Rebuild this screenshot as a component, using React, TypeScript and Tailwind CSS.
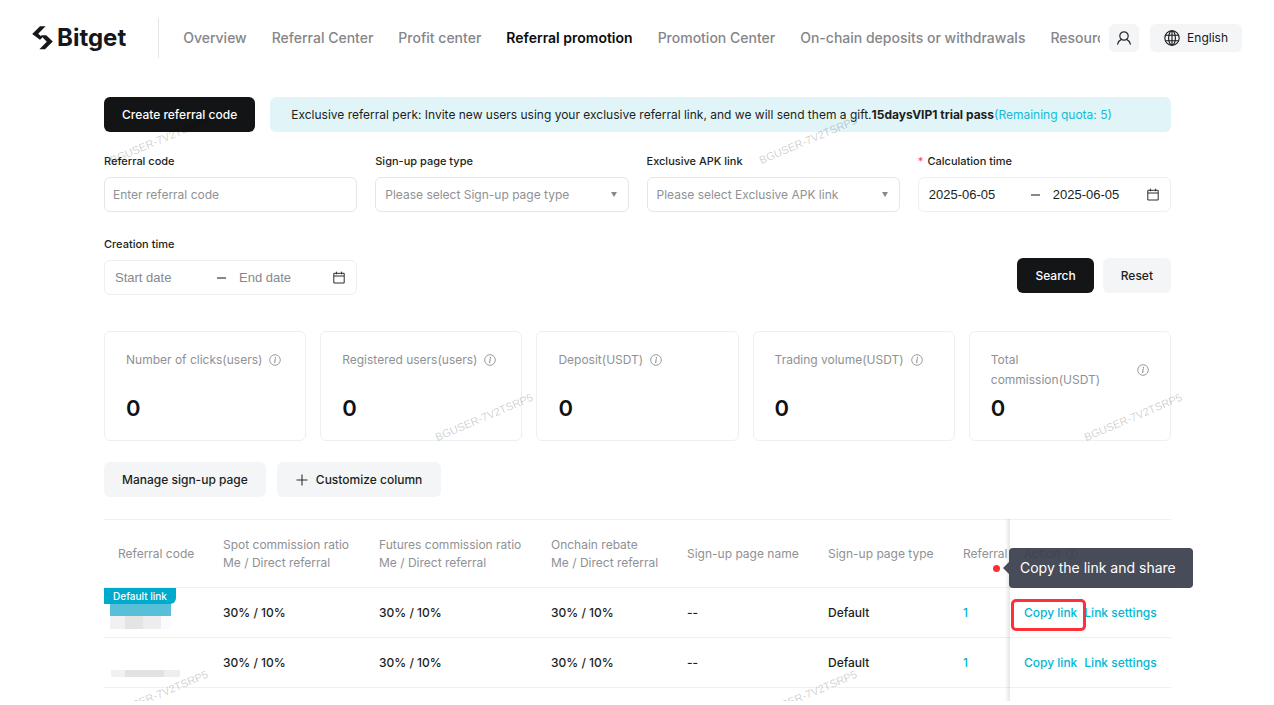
import { useState } from "react";

const NAV = [
  "Overview",
  "Referral Center",
  "Profit center",
  "Referral promotion",
  "Promotion Center",
  "On-chain deposits or withdrawals",
  "Resources",
];

const STATS = [
  "Number of clicks(users)",
  "Registered users(users)",
  "Deposit(USDT)",
  "Trading volume(USDT)",
  "Total commission(USDT)",
];

const ROWS = [
  { id: "a", isDefault: true, ratio: "30% / 10%", pageName: "--", pageType: "Default", referrals: 1 },
  { id: "b", isDefault: false, ratio: "30% / 10%", pageName: "--", pageType: "Default", referrals: 1 },
];

const MARK = "BGUSER-7V2TSRP5";

function InfoIcon() {
  return (
    <svg viewBox="0 0 12 12" className="size-3 shrink-0" fill="none" stroke="#8f9194" aria-hidden="true">
      <circle cx="6" cy="6" r="5.3" strokeWidth="0.9" />
      <path d="M6.1 5.3 5.7 8.6M6.4 3.2l-.1.9" strokeWidth="1.1" strokeLinecap="round" />
    </svg>
  );
}

function CalendarIcon() {
  return (
    <svg viewBox="0 0 12 13" className="h-[13px] w-3 shrink-0" fill="none" stroke="#2b2d30" aria-hidden="true">
      <path d="M.8 2.3h10.4v9.7H.8zM.8 5h10.4M3.4.7v2.6M8.6.7v2.6" strokeWidth="1" strokeLinejoin="round" />
    </svg>
  );
}

function Logo() {
  return (
    <a href="#home" className="flex items-center gap-1 text-[#15171a]">
      <svg viewBox="0 0 21 24" className="h-6 w-[21px]" fill="currentColor" aria-hidden="true">
        <path d="M8 .3h5.600L6.200 7.800l4.300 3.600-2.500 2.300L.2 7.900z" />
        <path d="M13 23.200H7.400l7.400-7.500-4.600-4.600H7.600L9.800 9.300h4.400l6.600 6.300z" />
      </svg>
      <span className="text-[24px] leading-8 font-bold">Bitget</span>
    </a>
  );
}

function Header() {
  return (
    <header className="flex h-[76px] items-center pr-8 pl-8">
      <Logo />
      <div className="ml-8 h-10 w-px shrink-0 bg-[#e3e4e6]" />
      <nav className="ml-6 flex min-w-0 flex-1 gap-[25px] overflow-hidden text-[14px] leading-5 font-medium whitespace-nowrap text-[#85868a]">
        {NAV.map((n) => (
          <a key={n} href="#nav" className={n === "Referral promotion" ? "font-semibold text-[#0b0c0e]" : ""}>
            {n}
          </a>
        ))}
      </nav>
      <button aria-label="Account" className="ml-[9px] flex h-7 w-[30px] items-center justify-center rounded-md bg-[#f4f5f7]">
        <svg viewBox="0 0 14 14" className="size-[14px]" fill="none" stroke="#2b2d30" strokeWidth="1.2" strokeLinecap="round">
          <circle cx="7" cy="5" r="4.2" />
          <path d="M4.4 8.400C2.600 9.200 1.200 10.800.6 13.200M9.600 8.400c1.800.8 3.200 2.400 3.800 4.800" />
        </svg>
      </button>
      <button className="ml-[11px] flex h-7 items-center gap-[7px] rounded-md bg-[#f4f5f7] px-[14px] text-[12px] text-[#15171a]">
        <svg viewBox="0 0 16 16" className="size-4" fill="none" stroke="#15171a" strokeWidth="1.1">
          <circle cx="8" cy="8" r="7.2" />
          <ellipse cx="8" cy="8" rx="3.4" ry="7.2" />
          <path d="M8 .8v14.400M1.500 5.300h13M1.500 10.700h13" />
        </svg>
        English
      </button>
    </header>
  );
}

function SelectField({ id, label, placeholder }: { id: string; label: string; placeholder: string }) {
  return (
    <div>
      <label htmlFor={id} className="block text-[11px] leading-4 font-medium">
        {label}
      </label>
      <div className="relative mt-2">
        <select
          id={id}
          className="h-[35px] w-full appearance-none rounded-md border border-[#e5e6e8] bg-white px-[9px] text-[12px] text-[#8f9194]"
        >
          <option>{placeholder}</option>
        </select>
        <svg viewBox="0 0 6 5" className="pointer-events-none absolute top-[15px] right-3 h-[5px] w-[6px]" fill="#86888b">
          <path d="M0 0h6L3 5z" />
        </svg>
      </div>
    </div>
  );
}

function DateRange({ label, required, from, to }: { label: string; required?: boolean; from: string; to: string }) {
  const [start, setStart] = useState(from);
  const [end, setEnd] = useState(to);
  const input = "w-[89px] min-w-0 bg-transparent font-['Liberation_Sans',sans-serif] text-[13px] placeholder:text-[#86888b]";

  return (
    <fieldset>
      <legend className="text-[11px] leading-4 font-medium">
        {required && <span className="mr-1 text-[#ff4d6a]">*</span>}
        {label}
      </legend>
      <div className="mt-2 flex h-[35px] items-center rounded-md border border-[#eeeff1] pr-[11px] pl-[10px]">
        <input
          aria-label="Start date"
          placeholder="Start date"
          value={start}
          onChange={(e) => setStart(e.target.value)}
          className={input}
        />
        <span className="mx-[13px] h-[2px] w-[9px] shrink-0 bg-[#86888b]" />
        <input
          aria-label="End date"
          placeholder="End date"
          value={end}
          onChange={(e) => setEnd(e.target.value)}
          className={input}
        />
        <span className="ml-auto">
          <CalendarIcon />
        </span>
      </div>
    </fieldset>
  );
}

function Filters() {
  return (
    <form className="mt-[21px] grid grid-cols-4 gap-x-[18px] gap-y-6" onSubmit={(e) => e.preventDefault()}>
      <div>
        <label htmlFor="code" className="block text-[11px] leading-4 font-medium">
          Referral code
        </label>
        <input
          id="code"
          placeholder="Enter referral code"
          className="mt-2 h-[35px] w-full rounded-md border border-[#e5e6e8] px-2 text-[12px] placeholder:text-[#8f9194]"
        />
      </div>
      <SelectField id="page-type" label="Sign-up page type" placeholder="Please select Sign-up page type" />
      <SelectField id="apk" label="Exclusive APK link" placeholder="Please select Exclusive APK link" />
      <DateRange label="Calculation time" required from="2025-06-05" to="2025-06-05" />
      <DateRange label="Creation time" from="" to="" />
      <div className="col-span-3 flex items-end justify-end gap-[9px] pb-[2px] text-[12px] font-medium">
        <button className="h-[35px] rounded-md bg-[#131516] px-[18px] text-white">Search</button>
        <button type="reset" className="h-[35px] rounded-md bg-[#f4f5f7] px-[18px]">
          Reset
        </button>
      </div>
    </form>
  );
}

function RedactedCode({ isDefault }: { isDefault: boolean }) {
  if (!isDefault) {
    return (
      <div className="ml-[7px] flex h-[27px] items-end">
        <span className="h-[7px] w-[14px] bg-[#f1f1f2]" />
        <span className="h-[7px] w-[39px] bg-[#e2e2e3]" />
        <span className="h-[7px] w-4 bg-[#eeeeef]" />
      </div>
    );
  }
  return (
    <div className="flex h-[49px] flex-col items-start">
      <span className="h-4 w-[72px] rounded-br-md bg-[#00aacd] text-center text-[10px] leading-4 font-medium text-white">
        Default link
      </span>
      <span className="ml-[6px] h-3 w-[61px] bg-[#57bfd8]" />
      <span className="ml-[6px] flex h-[13px]">
        <span className="w-[15px] bg-[#f1f1f3]" />
        <span className="w-[18px] bg-[#e3e4e4]" />
        <span className="w-[18px] bg-[#ededef]" />
        <span className="w-[10px] bg-[#fafbfe]" />
      </span>
    </div>
  );
}

function LinkTable() {
  const cell = "px-[14px]";
  return (
    <div className="relative mt-[22px] pb-[13px] text-[12px]">
      <table className="w-full table-fixed border-collapse text-left">
        <colgroup>
          <col className="w-[105px]" />
          <col className="w-[156px]" />
          <col className="w-[172px]" />
          <col className="w-[136px]" />
          <col className="w-[141px]" />
          <col className="w-[135px]" />
          <col />
          <col className="w-[161px]" />
        </colgroup>
        <thead>
          <tr className="h-[68px] border-y border-[#eff0f1] leading-[18px] text-[#8f9194] [&>th]:font-normal [&>th]:whitespace-nowrap">
            <th className={cell}>Referral code</th>
            <th className={cell}>
              Spot commission ratio
              <br />
              Me / Direct referral
            </th>
            <th className={cell}>
              Futures commission ratio
              <br />
              Me / Direct referral
            </th>
            <th className={cell}>
              Onchain rebate
              <br />
              Me / Direct referral
            </th>
            <th className={cell}>Sign-up page name</th>
            <th className={cell}>Sign-up page type</th>
            <th className="pl-[14px]">Referral</th>
            <th className={cell}>
              <span className="flex items-center gap-[6px]">
                Action <InfoIcon />
              </span>
            </th>
          </tr>
        </thead>
        <tbody>
          {ROWS.map((r) => (
            <tr key={r.id} className="h-[50px] border-b border-[#eff0f1] font-medium text-[#1c1e21]">
              <td className={r.isDefault ? "align-top" : "align-bottom pb-[10px]"}>
                <RedactedCode isDefault={r.isDefault} />
              </td>
              <td className={cell}>{r.ratio}</td>
              <td className={cell}>{r.ratio}</td>
              <td className={cell}>{r.ratio}</td>
              <td className={cell}>{r.pageName}</td>
              <td className={cell}>{r.pageType}</td>
              <td className="pl-[14px] text-[#00b4cf]">{r.referrals}</td>
              <td className={cell}>
                <span className="flex gap-[7px] whitespace-nowrap text-[#00b8d4]">
                  <span className="relative">
                    <a href="#copy">Copy link</a>
                    {r.isDefault && (
                      <span className="pointer-events-none absolute -top-[5px] -right-[9px] -bottom-[9px] -left-[13px] z-10 rounded-[5px] border-3 border-[#ff3038]" />
                    )}
                  </span>
                  <a href="#settings">Link settings</a>
                </span>
              </td>
            </tr>
          ))}
        </tbody>
      </table>

      {/* edge of the pinned action column */}
      <div className="pointer-events-none absolute top-0 right-[161px] bottom-0 w-[5px] bg-linear-to-r from-transparent to-black/10" />

      <div role="tooltip" className="absolute top-[29px] -right-[22px] z-20 flex items-center">
        <span className="size-[7px] rounded-full bg-[#ff2d37]" />
        <svg viewBox="0 0 6 12" className="ml-[3px] h-3 w-[6px]" fill="#484b58">
          <path d="M6 0v12L0 6z" />
        </svg>
        <span className="flex h-10 w-[184px] items-center rounded-[4px] bg-[#3a3d4b]/93 px-[11px] pb-[2px] text-[14px] whitespace-nowrap text-white">
          Copy the link and share
        </span>
      </div>
    </div>
  );
}

function Watermark() {
  const mark =
    "absolute w-[106px] -rotate-[23deg] text-center font-['Liberation_Sans',sans-serif] text-[11px] leading-4 whitespace-nowrap text-black/20";
  return (
    <div aria-hidden="true" className="pointer-events-none absolute inset-0">
      <span className={`${mark} top-[132px] left-[106px]`}>{MARK}</span>
      <span className={`${mark} top-[132px] left-[755px]`}>{MARK}</span>
      <span className={`${mark} top-[409px] left-[431px]`}>{MARK}</span>
      <span className={`${mark} top-[409px] left-[1080px]`}>{MARK}</span>
      <span className={`${mark} top-[686px] left-[106px]`}>{MARK}</span>
      <span className={`${mark} top-[686px] left-[755px]`}>{MARK}</span>
    </div>
  );
}

export default function App() {
  return (
    <div className="relative overflow-hidden bg-white font-['Inter',sans-serif] text-[#1c1e21]">
      <Header />
      <main className="pt-[21px] pr-[103px] pl-[104px]">
        <div className="flex gap-[15px] text-[12px]">
          <button className="h-[35px] shrink-0 rounded-md bg-[#131416] px-[18px] font-medium text-white">
            Create referral code
          </button>
          <p className="flex h-[35px] flex-1 items-center rounded-md bg-[#e1f5f9] px-[21px] whitespace-nowrap">
            Exclusive referral perk: Invite new users using your exclusive referral link, and we will send them a gift.
            <strong className="font-bold">15daysVIP1 trial pass</strong>
            <span className="text-[#0fbcd6]">(Remaining quota: 5)</span>
          </p>
        </div>

        <Filters />

        <section className="mt-9 grid grid-cols-5 gap-[14px]">
          {STATS.map((s) => (
            <div key={s} className="flex h-[110px] flex-col justify-between rounded-md border border-[#eeeff1] px-[21px] pt-[18px] pb-[18px]">
              <div className="flex items-center gap-[7px] text-[12px] leading-5 text-[#8f9194]">
                {s} <InfoIcon />
              </div>
              <div className="text-[22px] leading-7 font-semibold text-[#0f1113]">0</div>
            </div>
          ))}
        </section>

        <div className="mt-[21px] flex gap-[11px] text-[12px] font-medium">
          <button className="h-[35px] rounded-md bg-[#f4f5f7] px-[18px]">Manage sign-up page</button>
          <button className="flex h-[35px] items-center gap-2 rounded-md bg-[#f4f5f7] px-[19px]">
            <svg viewBox="0 0 12 12" className="size-3" stroke="#2b2d30" strokeWidth="1.1" aria-hidden="true">
              <path d="M6 .5v11M.5 6h11" />
            </svg>
            Customize column
          </button>
        </div>

        <LinkTable />
      </main>
      <Watermark />
    </div>
  );
}
